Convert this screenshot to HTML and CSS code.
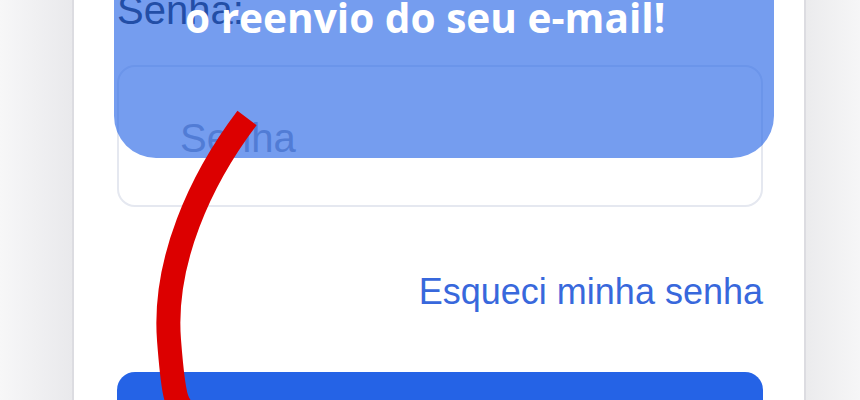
FILE: index.html
```html
<!DOCTYPE html>
<html lang="pt-BR">

<head>
  <meta charset="UTF-8">
  <meta name="viewport" content="width=device-width, initial-scale=1.0">
  <title>Login</title>
  <link rel="stylesheet" href="styles.css">
</head>

<body>
  <div class="screen">
    <div class="side left"></div>
    <div class="card">
      <label class="label" for="senha">Senha:</label>
      <input class="field" id="senha" type="password" placeholder="Senha">
      <div class="forgot">
        <a href="#">Esqueci minha senha</a>
      </div>
      <button class="submit"></button>
    </div>
    <div class="side right"></div>

    <!-- aviso sobre o formulario -->
    <div class="toast">
      <p class="toastText">o reenvio do seu e-mail!</p>
    </div>

    <!-- seta desenhada -->
    <svg class="arrow" width="860" height="400" viewBox="0 0 860 400">
      <path d="M247 118 C200 180, 163 262, 169 340 S179 396, 182 412" fill="none" stroke="#dc0000" stroke-width="24" />
    </svg>
  </div>
</body>

</html>
```

FILE: styles.css
```css
body {
  margin: 0;
  overflow: hidden;
  font-family: "Liberation Sans", Arial, sans-serif;
}
.screen {
  position: relative;
  display: flex;
  width: 860px;
  height: 400px;
  overflow: hidden;
}
.side {
  flex: none;
  height: 100%;
}
.side.left {
  width: 72px;
  background: linear-gradient(to right, #f7f7f8, #e9e9ec);
}
.side.right {
  width: 54px;
  background: linear-gradient(to right, #ebebed, #f6f6f7);
}
.card {
  flex: none;
  box-sizing: border-box;
  width: 734px;
  padding: 0 41px 0 43px;
  background: #fff;
  border-left: 2px solid #dcdce1;
  border-right: 2px solid #dcdce1;
}
.label {
  display: block;
  margin-top: -10px;
  font-size: 40px;
  line-height: 40px;
  color: #1e293b;
}
.field {
  display: block;
  box-sizing: border-box;
  width: 100%;
  height: 142px;
  margin-top: 35px;
  padding: 4px 0 0 61px;
  border: 2px solid #e5e8f0;
  border-radius: 18px;
  font-family: inherit;
  font-size: 40px;
  outline: none;
}
.field::placeholder {
  color: #9ea6b8;
}
.forgot {
  margin-top: 67px;
  text-align: right;
  font-size: 36px;
  line-height: 36px;
}
.forgot a {
  color: #3868dc;
  text-decoration: none;
}
.submit {
  display: block;
  width: 100%;
  height: 90px;
  margin-top: 62px;
  border: none;
  border-radius: 18px;
  background: #2563e6;
}
.toast {
  position: absolute;
  left: 114px;
  top: -40px;
  box-sizing: border-box;
  width: 660px;
  height: 198px;
  padding: 38px 0 0 71px;
  border-radius: 0 0 42px 42px;
  background: rgba(37, 99, 230, 0.63);
}
.toastText {
  margin: 0;
  font-family: "Open Sans", sans-serif;
  font-weight: 700;
  font-size: 40.6px;
  line-height: 1;
  color: #fff;
}
.arrow {
  position: absolute;
  left: 0;
  top: 0;
  pointer-events: none;
}
```
